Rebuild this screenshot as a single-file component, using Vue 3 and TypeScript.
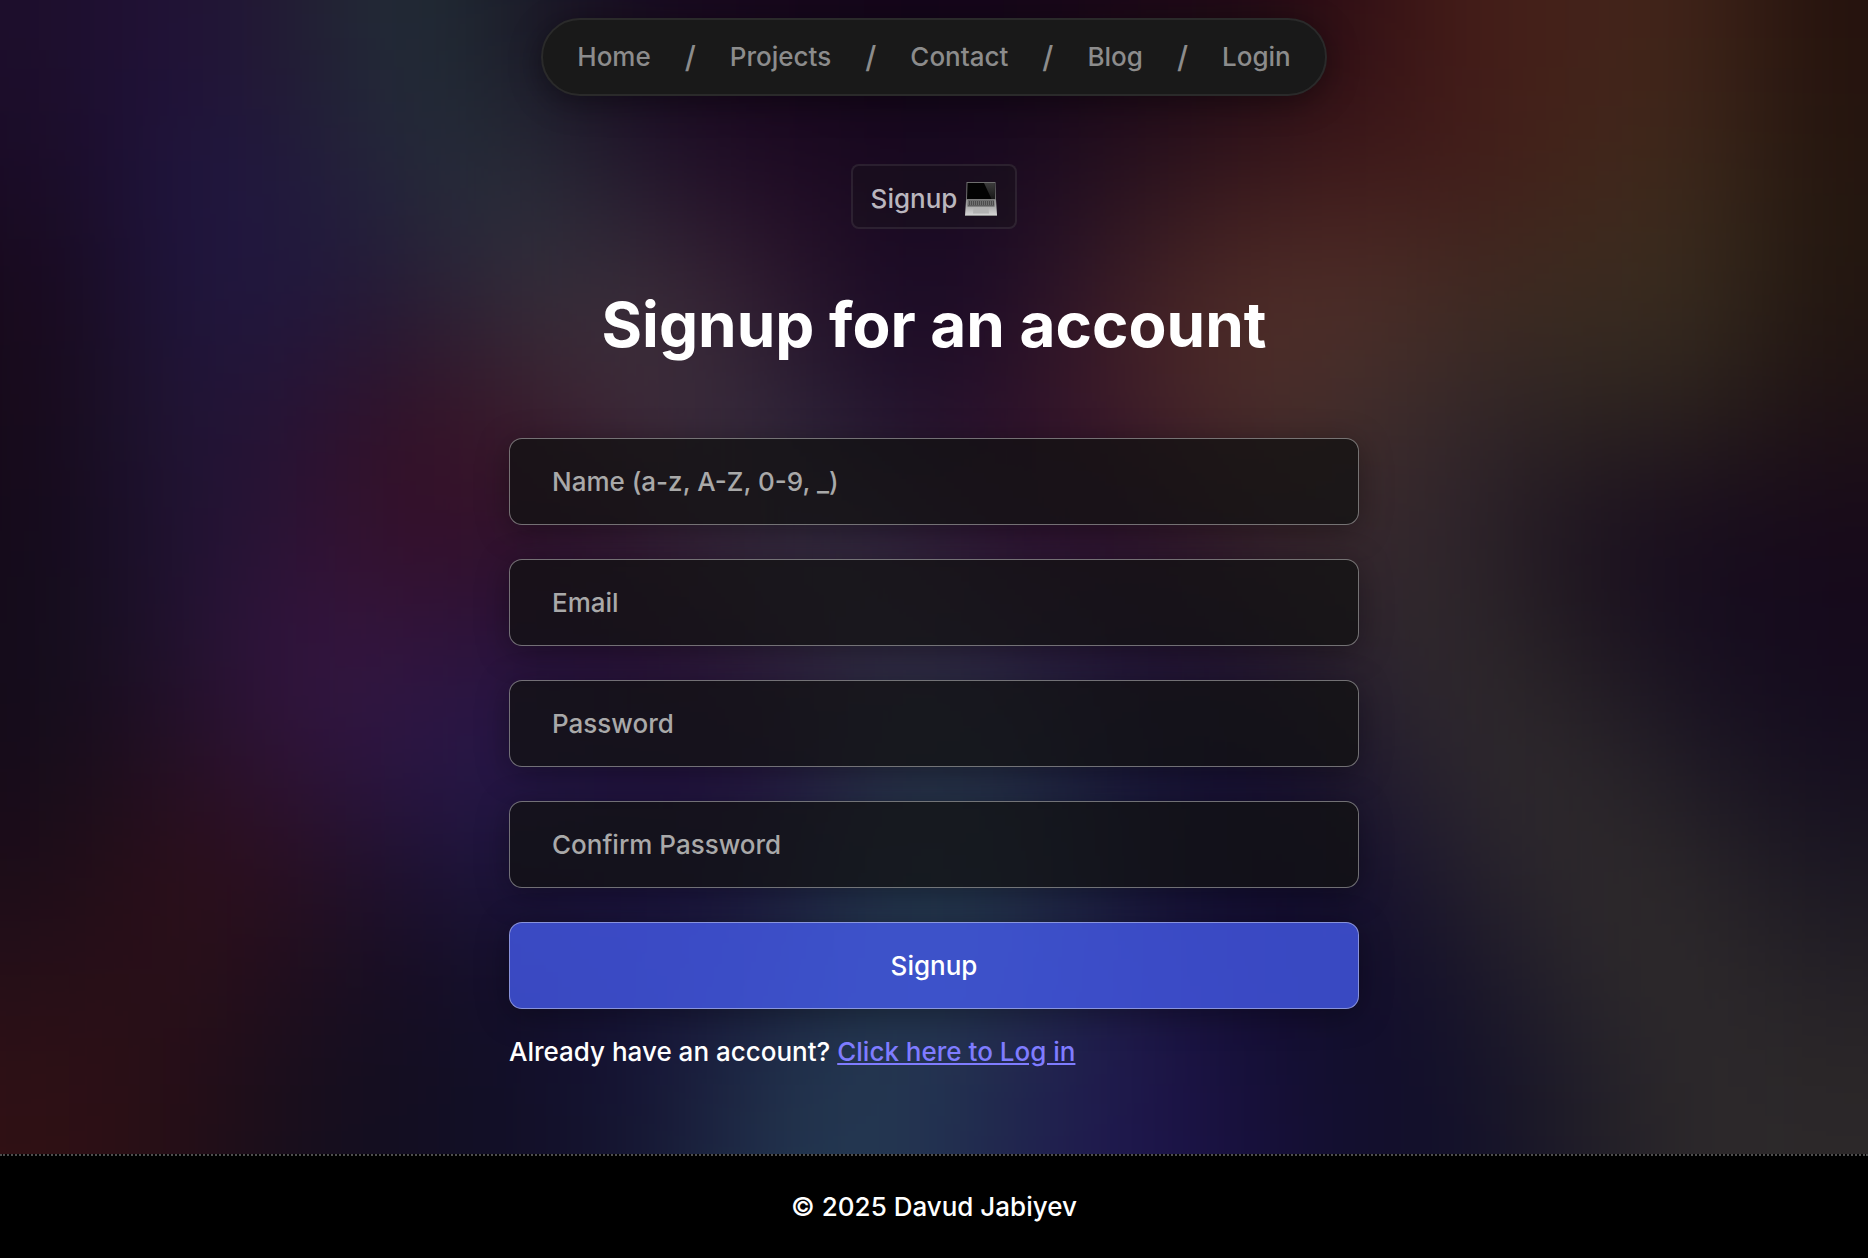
<script setup lang="ts">
import { ref } from 'vue'

interface Field {
  id: string
  type: string
  label: string
}

interface Cell {
  x: number
  y: number
  w: number
  h: number
  fill: string
}

const links: string[] = ['Home', 'Projects', 'Contact', 'Blog', 'Login']

const fields: Field[] = [
  { id: 'name', type: 'text', label: 'Name (a-z, A-Z, 0-9, _)' },
  { id: 'email', type: 'email', label: 'Email' },
  { id: 'password', type: 'password', label: 'Password' },
  { id: 'confirm', type: 'password', label: 'Confirm Password' },
]

const values = ref<Record<string, string>>({ name: '', email: '', password: '', confirm: '' })

// Colour mesh behind the page: one row of swatches per line, softened by a blur.
const mesh: string[] = [
  '1d0e2b 21123a 221a30 23323a 1a1a26 180a20 18081c 14061a 14061a 1c0818 1c0a16 300d14 461d18 43221a 42261a 24120d',
  '1a0b26 1f1542 22183c 24293a 29303a 22142c 200a26 190920 180a22 241020 35151b 401a1a 3f1a1a 43261a 3c2a1c 24160f',
  '180a1c 20153e 20183f 251b35 33303c 3b303a 331c2f 1a0a24 1c0b28 3a1c26 4f2c26 52302a 432c22 3b2b20 3a2e20 22160f',
  '170a1a 201638 261336 331226 3c1c2a 40303c 32283a 1c0f2a 281028 3f1a28 4d2c28 43302a 33262a 2e2622 2d241e 1e1214',
  '150a1a 1e1434 2b1234 380e24 30102a 341c30 383040 33283e 301030 2c102c 38202a 3a2a2e 2e242c 1c121e 180c1e 180a1a',
  '130c1a 201230 351442 33163a 26103a 2c1034 30203a 343044 302444 281438 241430 30262e 2f2a2c 20181f 160d20 150a1c',
  '150c1a 241024 30143a 2c164a 26184a 20143c 281040 283044 243046 1a1a3c 160f34 20182f 302a2e 2c282b 1c1724 150d1f',
  '1b0c18 2f0e18 2a0f20 1c1232 1e1640 1c123e 1e1a44 243a50 24364c 1a1c3c 120c30 140e30 241f2c 302b2c 2a2628 1a1622',
  '260f18 2b0f18 1f0e1e 150d22 120e2a 16123a 1c2040 243850 243450 201c4c 160f36 100c2c 161228 2a262b 2f2b2c 242026',
  '301014 260e16 170e1c 120e22 120f28 151432 20304a 253c54 20284c 201850 181040 120e2c 12102a 1e1b26 2e2a2b 2c2829',
]

const size = 100
const rows = mesh.length
const cols = mesh[0].split(' ').length

const cells: Cell[] = mesh.flatMap((line, r) =>
  line.split(' ').map((hex, c) => {
    const left = c === 0 ? -3 : c
    const right = c === cols - 1 ? cols + 3 : c + 1
    const top = r === 0 ? -3 : r
    const bottom = r === rows - 1 ? rows + 3 : r + 1
    return {
      x: left * size,
      y: top * size,
      w: (right - left) * size + 1,
      h: (bottom - top) * size + 1,
      fill: '#' + hex,
    }
  }),
)
</script>

<template>
  <div class="page">
    <div class="stage">
      <svg
        class="mesh"
        :viewBox="`0 0 ${cols * size} ${rows * size}`"
        preserveAspectRatio="none"
        aria-hidden="true"
      >
        <defs>
          <filter
            id="soften"
            filterUnits="userSpaceOnUse"
            x="-300"
            y="-300"
            :width="cols * size + 600"
            :height="rows * size + 600"
            color-interpolation-filters="sRGB"
          >
            <feGaussianBlur stdDeviation="60" />
          </filter>
        </defs>
        <g filter="url(#soften)">
          <rect
            v-for="(cell, i) in cells"
            :key="i"
            :x="cell.x"
            :y="cell.y"
            :width="cell.w"
            :height="cell.h"
            :fill="cell.fill"
          />
        </g>
      </svg>

      <header class="top">
        <nav class="nav">
          <template v-for="(link, i) in links" :key="link">
            <span v-if="i > 0" class="slash">/</span>
            <a href="#" class="nav-link">{{ link }}</a>
          </template>
        </nav>
      </header>

      <main class="content">
        <div class="badge">
          <span>Signup</span>
          <svg class="laptop" viewBox="0 0 32 34" aria-hidden="true">
            <defs>
              <linearGradient id="base" x1="0" y1="0" x2="0" y2="1">
                <stop offset="0" stop-color="#8b8b8b" />
                <stop offset="1" stop-color="#d6d6d6" />
              </linearGradient>
              <linearGradient id="glare" x1="0" y1="0" x2="0" y2="1">
                <stop offset="0" stop-color="#3c3c3c" />
                <stop offset="1" stop-color="#181818" />
              </linearGradient>
            </defs>
            <path d="M1.500 0H30.500L31 18H1Z" fill="#6e6e6e" />
            <path d="M2.500 1H29.500L30 17H2Z" fill="#030303" />
            <path d="M19 1H29.500L30 17H26.500Z" fill="url(#glare)" />
            <path d="M1 17.500H31L32 33.500H0Z" fill="url(#base)" />
            <path d="M3 18.500H29L29.500 24.500H2.500Z" fill="#4c4c4c" />
            <path
              d="M3 20H29M3 22H29M2.500 24H29.500"
              stroke="#959595"
              stroke-width="1"
              stroke-dasharray="1 1"
            />
            <path d="M8.500 26H23.500L24 31.500H8Z" fill="#b2b2b2" />
            <path d="M0 33H32V34H0Z" fill="#8e8e8e" />
          </svg>
        </div>

        <h1 class="title">Signup for an account</h1>

        <form class="form" @submit.prevent>
          <input
            v-for="field in fields"
            :id="field.id"
            :key="field.id"
            v-model="values[field.id]"
            class="control field"
            :type="field.type"
            :placeholder="field.label"
            :aria-label="field.label"
          />
          <button class="control submit" type="submit">Signup</button>
        </form>

        <p class="hint">Already have an account? <a href="#">Click here to Log in</a></p>
      </main>
    </div>

    <footer class="footer">© 2025 Davud Jabiyev</footer>
  </div>
</template>

<style>
body {
  margin: 0;
  background: #000;
}
</style>

<style scoped>
.page {
  display: flex;
  flex-direction: column;
  min-height: 100vh;
  font-family: Inter, "Liberation Sans", sans-serif;
  font-size: 26px;
  font-weight: 500;
  line-height: 36px;
  color: #fff;
}

.stage {
  position: relative;
  flex: 1;
  display: flex;
  flex-direction: column;
  align-items: center;
  box-sizing: border-box;
  padding: 18px 24px 0;
  overflow: hidden;
}

.mesh {
  position: absolute;
  inset: 0;
  width: 100%;
  height: 100%;
}

.top,
.content {
  position: relative;
}

.nav {
  display: flex;
  align-items: center;
  gap: 34px;
  box-sizing: border-box;
  height: 78px;
  padding: 0 34px;
  border: 2px solid #2a2a2a;
  border-radius: 39px;
  background: #191919;
  box-shadow: 0 6px 32px rgba(0, 0, 0, 0.4);
  color: #8c8c8c;
}

.nav-link {
  color: inherit;
  text-decoration: none;
}

.slash {
  font-size: 30px;
}

.content {
  display: flex;
  flex-direction: column;
  align-items: center;
  width: 100%;
  max-width: 850px;
}

.badge {
  display: flex;
  align-items: center;
  gap: 8px;
  box-sizing: border-box;
  height: 65px;
  margin-top: 68px;
  padding: 4px 18px 0;
  border: 2px solid rgba(255, 255, 255, 0.08);
  border-radius: 8px;
  background: rgba(24, 24, 24, 0.3);
  color: #bab6be;
}

.laptop {
  width: 32px;
  height: 34px;
}

.title {
  margin: 56px 0 73px;
  font-size: 62px;
  font-weight: 700;
  line-height: 80px;
  text-align: center;
}

.form {
  display: flex;
  flex-direction: column;
  gap: 34px;
  width: 100%;
}

.control {
  box-sizing: border-box;
  width: 100%;
  height: 87px;
  margin: 0;
  padding: 0 42px;
  border: 1px solid rgba(255, 255, 255, 0.4);
  border-radius: 13px;
  box-shadow: 0 6px 32px rgba(0, 0, 0, 0.35);
  font: inherit;
  color: #fff;
}

.field {
  background: rgba(18, 18, 18, 0.75);
}

.field::placeholder {
  color: #a9a9a9;
  opacity: 1;
}

.submit {
  background: rgba(70, 92, 240, 0.76);
}

.hint {
  align-self: flex-start;
  margin: 25px 0 84px;
}

.hint a {
  color: #7f7cff;
}

.footer {
  box-sizing: border-box;
  height: 104px;
  padding-top: 33px;
  border-top: 2px dotted #4d4d4d;
  background: #000;
  text-align: center;
}
</style>
